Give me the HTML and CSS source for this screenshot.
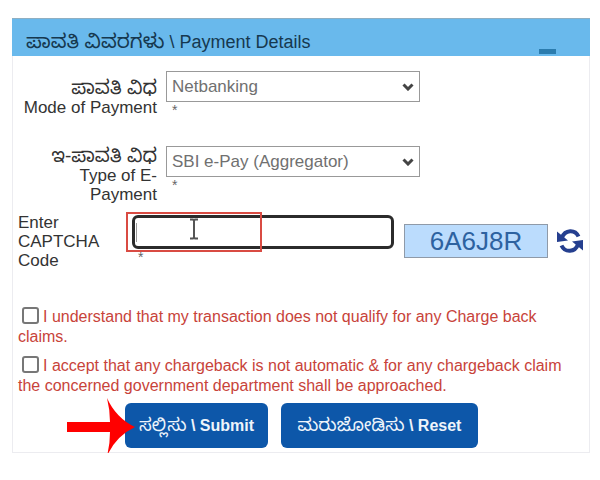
FILE: index.html
```html
<!DOCTYPE html>
<html lang="kn">
<head>
<meta charset="utf-8">
<meta name="viewport" content="width=device-width, initial-scale=1">
<title>Payment Details</title>
<link rel="stylesheet" href="styles.css">
</head>
<body>
<form class="panel">
  <header class="panel-head">
    <h1 class="title"><span class="kn">ಪಾವತಿ ವಿವರಗಳು</span> \ Payment Details</h1>
    <button class="collapse" type="button" aria-label="Collapse"></button>
  </header>
  <div class="panel-body">
    <div class="row">
      <label class="label" for="mode"><span class="kn">ಪಾವತಿ ವಿಧ</span><br>Mode of Payment</label>
      <div class="field">
        <div class="select-box">
          <select class="select" id="mode"><option>Netbanking</option></select>
          <svg class="chevron" viewBox="0 0 12 8"><path d="M1.5 1.5 6 6l4.500-4.500"/></svg>
        </div>
        <span class="required">*</span>
      </div>
    </div>
    <div class="row">
      <label class="label" for="type"><span class="kn">ಇ-ಪಾವತಿ ವಿಧ</span><br>Type of E-<br>Payment</label>
      <div class="field">
        <div class="select-box">
          <select class="select" id="type"><option>SBI e-Pay (Aggregator)</option></select>
          <svg class="chevron" viewBox="0 0 12 8"><path d="M1.5 1.5 6 6l4.500-4.500"/></svg>
        </div>
        <span class="required">*</span>
      </div>
    </div>
    <div class="captcha-row">
      <label class="captcha-label" for="captcha">Enter CAPTCHA Code</label>
      <div class="captcha-field">
        <input class="captcha-input" id="captcha" type="text">
        <span class="required">*</span>
        <span class="caret"></span>
        <span class="highlight"></span>
        <svg class="ibeam" viewBox="0 0 10 22"><path d="M1 1.500h3l1 1 1-1h3M5 2v18M1 20.500h3l1-1 1 1h3"/></svg>
      </div>
      <div class="captcha-code">6A6J8R</div>
      <button class="refresh" type="button" aria-label="Refresh code">
        <svg viewBox="0 0 26 26">
          <path class="arc" d="M5 9.500C8 1.500 18 1 21.500 8.500M21 16.500C18 24.500 8 25 4.500 17.500"/>
          <path class="tip" d="M0 3.500V14l11-1.500zM26 22.500V12l-11 1.500z"/>
        </svg>
      </button>
    </div>
    <div class="terms">
      <p class="term"><input class="check" type="checkbox" id="t1"><label for="t1">I understand that my transaction does not qualify for any Charge back claims.</label></p>
      <p class="term"><input class="check" type="checkbox" id="t2"><label for="t2">I accept that any chargeback is not automatic &amp; for any chargeback claim the concerned government department shall be approached.</label></p>
    </div>
    <div class="actions">
      <button class="btn" type="submit"><span class="btn-kn">ಸಲ್ಲಿಸು</span> \ Submit</button>
      <button class="btn btn-reset" type="reset"><span class="btn-kn">ಮರುಜೋಡಿಸು</span> \ Reset</button>
      <svg class="pointer" viewBox="0 0 68 60"><path d="M0 25h43Q43 13 40 1q9 20 28 29-19 9-28 29 3-12 3-24H0z"/></svg>
    </div>
  </div>
</form>
</body>
</html>
```
FILE: styles.css
```css
* { box-sizing: border-box; }
body {
  margin: 18px 10px 18px 12px;
  background: #fff;
  color: #333;
  font: 17px/19px "Liberation Sans", "Noto Sans Kannada", sans-serif;
}
.kn { font-size: 19px; line-height: 19px; }
.panel { border: 1px solid #ececf0; border-top: 0; }
.panel-head {
  display: flex;
  justify-content: space-between;
  height: 38px;
  margin: 0 -1px;
  padding: 0 34px 0 14px;
  background: #69b9ec;
  border-top: 1px solid #8fafc2;
}
.title {
  margin: 0;
  padding-top: 4px;
  font-size: 18px;
  font-weight: 400;
  line-height: 38px;
  color: #16384f;
}
.title .kn { font-size: 20px; }
.collapse {
  align-self: flex-end;
  width: 17px;
  height: 5px;
  margin-bottom: 2px;
  padding: 0;
  border: 0;
  background: #2b7cae;
}
.panel-body { padding: 15px 5px 4px; }
.row {
  display: grid;
  grid-template-columns: 139px minmax(0, 254px);
  column-gap: 9px;
  min-height: 75px;
}
.label { padding-top: 7px; text-align: right; }
.row + .row .label { padding-top: 0; }
.select-box { position: relative; }
.select {
  display: block;
  width: 100%;
  height: 31px;
  padding: 0 5px;
  appearance: none;
  border: 1px solid #999;
  border-radius: 0;
  background: #fff;
  color: #707070;
  font: inherit;
}
.chevron {
  position: absolute;
  right: 6px;
  top: 12px;
  width: 12px;
  height: 8px;
  fill: none;
  stroke: #444;
  stroke-width: 3;
  pointer-events: none;
}
.required {
  display: block;
  padding-left: 6px;
  font-size: 14px;
  line-height: 16px;
  color: #666;
}
.captcha-row { display: flex; align-items: flex-start; margin-top: -6px; }
.captcha-label { width: 90px; margin-top: -2px; margin-right: 24px; }
.captcha-field { position: relative; flex: 0 1 262px; }
.captcha-input {
  display: block;
  width: 100%;
  height: 34px;
  padding: 0 6px;
  border: 3px solid #2b2b2b;
  border-radius: 6px;
  background: #fff;
  font: inherit;
  outline: 0;
}
.caret {
  position: absolute;
  left: 4px;
  top: 8px;
  width: 1px;
  height: 19px;
  background: #999;
}
.highlight {
  position: absolute;
  left: -6px;
  top: -3px;
  width: 136px;
  height: 40px;
  border: 2px solid #d94b43;
}
.ibeam {
  position: absolute;
  left: 57px;
  top: 3px;
  width: 10px;
  height: 22px;
  fill: none;
  stroke: #555;
  stroke-width: 2;
}
.captcha-code {
  flex: 0 1 144px;
  margin: 9px 9px 0 10px;
  border: 1px solid #8f9aa8;
  background: #bbdcfd;
  color: #2d62a0;
  font-size: 26px;
  line-height: 32px;
  text-align: center;
}
.refresh {
  width: 26px;
  height: 26px;
  margin-top: 13px;
  padding: 0;
  border: 0;
  background: none;
}
.refresh svg { display: block; }
.arc { fill: none; stroke: #253f8f; stroke-width: 4; }
.tip { fill: #253f8f; }
.terms {
  display: grid;
  gap: 9px;
  margin: 37px 0 7px;
  color: #c8433a;
  font-size: 16px;
}
.term { margin: 0; line-height: 20px; }
.check {
  width: 17px;
  height: 17px;
  margin: 0 4px 0 4px;
  vertical-align: -2px;
  appearance: none;
  border: 2px solid #777;
  border-radius: 3px;
  background: #fff;
}
.actions {
  position: relative;
  display: flex;
  gap: 13px;
  padding-left: 107px;
}
.btn {
  flex: 0 1 143px;
  height: 45px;
  padding: 0;
  border: 0;
  border-radius: 6px;
  background: #0d57a9;
  color: #eef4fb;
  font: inherit;
  font-size: 16px;
  font-weight: 700;
  white-space: nowrap;
}
.btn-kn { font-size: 18px; font-weight: 400; }
.btn-reset { flex-basis: 197px; }
.pointer {
  position: absolute;
  left: 49px;
  top: -6px;
  width: 68px;
  height: 60px;
  fill: #f00;
}
```
